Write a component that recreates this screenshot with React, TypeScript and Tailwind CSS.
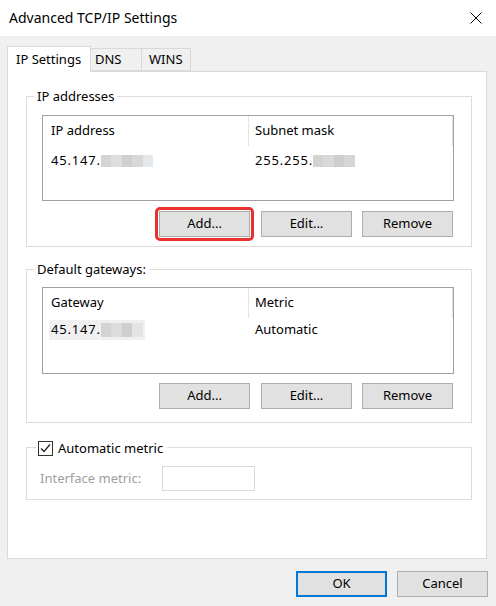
import React from 'react';

function Btn({ label, className = '' }: { label: string; className?: string }) {
    return (
        <div className={`w-[91px] h-[26px] bg-[#e1e1e1] border border-[#adadad] flex items-center justify-center text-[13px] text-black ${className}`}>
            {label}
        </div>
    );
}

function Blur({ shades, h = 'h-[12px]' }: { shades: string[]; h?: string }) {
    return (
        <span className={`inline-flex ${h}`}>
            {shades.map((c, i) => (
                <span key={i} className="w-[10.5px] h-full" style={{ background: c }} />
            ))}
        </span>
    );
}

function GroupLabel({ children }: { children: React.ReactNode }) {
    return (
        <span className="absolute left-[7px] -top-[11px] bg-white px-[3px] text-[13px] leading-[20px] text-black">
            {children}
        </span>
    );
}

export default function App() {
    return (
        <div className="w-[496px] h-[606px] bg-[#f0f0f0] flex flex-col font-['Noto_Sans','Segoe_UI',sans-serif] text-black">
            {/* title bar */}
            <div className="h-[36px] bg-white flex items-center justify-between pl-[9px] pr-[14px]">
                <span className="text-[14px] leading-none">Advanced TCP/IP Settings</span>
                <svg width="12" height="12" viewBox="0 0 12 12">
                    <path d="M0.5 0.5 L11.5 11.5 M11.5 0.5 L0.5 11.5" stroke="#000" strokeWidth="1" />
                </svg>
            </div>

            <div className="pl-[7px] pt-[10px] flex flex-col">
                {/* tabs */}
                <div className="flex items-end h-[25px]">
                    <div className="relative z-10 h-[26px] -mb-px w-[84px] bg-white border border-b-0 border-[#d9d9d9] flex items-center pl-[8px] text-[13px]">
                        IP Settings
                    </div>
                    <div className="h-[23px] w-[51px] bg-[#f0f0f0] border border-l-0 border-[#d9d9d9] flex items-center pl-[4px] text-[13px]">
                        DNS
                    </div>
                    <div className="h-[23px] w-[49px] bg-[#f0f0f0] border border-l-0 border-[#d9d9d9] flex items-center pl-[7px] text-[13px]">
                        WINS
                    </div>
                </div>

                {/* tab panel */}
                <div className="w-[480px] h-[488px] bg-white border border-[#d9d9d9] flex flex-col pl-[18px] pt-[24px]">
                    {/* IP addresses */}
                    <div className="relative w-[446px] h-[151px] border border-[#dcdcdc] pl-[15px] pt-[18px] flex flex-col">
                        <GroupLabel>IP addresses</GroupLabel>
                        <div className="w-[412px] h-[86px] border border-[#a0a0a0] flex flex-col">
                            <div className="flex h-[30px] items-center text-[13px]">
                                <div className="w-[206px] h-full flex items-center pl-[8px] border-r border-[#e5e5e5]">IP address</div>
                                <div className="w-[204px] h-full flex items-center pl-[6px] border-r border-[#e5e5e5]">Subnet mask</div>
                            </div>
                            <div className="flex h-[20px] mt-[5px] items-center text-[13px]">
                                <div className="w-[206px] pl-[8px] flex items-center">
                                    <span className="tracking-[0.8px]">45.147.</span>
                                    <Blur shades={['#d4d4d4', '#dedede', '#cfcfcf', '#d8d8d8', '#e6e9ec']} />
                                </div>
                                <div className="w-[204px] pl-[6px] flex items-center">
                                    <span className="tracking-[0.8px]">255.255.</span>
                                    <Blur shades={['#d2d2d2', '#d9d9d9', '#cdcdcd', '#d6d6d6']} />
                                </div>
                            </div>
                        </div>
                        <div className="flex gap-[10px] ml-[117px] mt-[10px]">
                            <div className="relative">
                                <Btn label="Add..." />
                                <span className="absolute -inset-[4px] border-[3px] border-[#e8322c] rounded-[5px]" />
                            </div>
                            <Btn label="Edit..." className="ml-[1px]" />
                            <Btn label="Remove" />
                        </div>
                    </div>

                    {/* Default gateways */}
                    <div className="relative mt-[22px] w-[446px] h-[154px] border border-[#dcdcdc] pl-[15px] pt-[17px] flex flex-col">
                        <GroupLabel>Default gateways:</GroupLabel>
                        <div className="w-[412px] h-[87px] border border-[#a0a0a0] flex flex-col">
                            <div className="flex h-[30px] items-center text-[13px]">
                                <div className="w-[206px] h-full flex items-center pl-[8px] border-r border-[#e5e5e5]">Gateway</div>
                                <div className="w-[204px] h-full flex items-center pl-[6px] border-r border-[#e5e5e5]">Metric</div>
                            </div>
                            <div className="flex h-[20px] mt-[2px] items-center text-[13px]">
                                <div className="w-[206px] pl-[6px] flex items-center">
                                    <span className="flex items-center h-[20px] bg-[#f0f0f0] pl-[2px] pr-[2px]">
                                        <span className="tracking-[0.8px]">45.147.</span>
                                        <Blur shades={['#d3d3d3', '#dcdcdc', '#cfcfcf', '#e4e4e4']} h="h-[14px]" />
                                    </span>
                                </div>
                                <div className="w-[204px] pl-[6px] flex items-center">Automatic</div>
                            </div>
                        </div>
                        <div className="flex gap-[10px] ml-[117px] mt-[9px]">
                            <Btn label="Add..." />
                            <Btn label="Edit..." className="ml-[1px]" />
                            <Btn label="Remove" />
                        </div>
                    </div>

                    {/* Automatic metric */}
                    <div className="relative mt-[24px] w-[446px] h-[53px] border border-[#dcdcdc] pl-[13px] pt-[18px] flex items-start">
                        <span className="absolute left-[9px] -top-[10px] bg-white pl-[2px] pr-[4px] flex items-center gap-[5px] text-[13px] leading-[20px]">
                            <span className="w-[15px] h-[15px] border border-[#333] flex items-center justify-center">
                                <svg width="11" height="11" viewBox="0 0 11 11">
                                    <path d="M1 5.5 L4 8.5 L10 1.5" fill="none" stroke="#222" strokeWidth="1.3" />
                                </svg>
                            </span>
                            Automatic metric
                        </span>
                        <span className="text-[13px] text-[#a0a0a0] h-[25px] flex items-center">Interface metric:</span>
                        <div className="ml-[21px] w-[93px] h-[25px] border border-[#d9d9d9] bg-white" />
                    </div>
                </div>

                {/* footer */}
                <div className="flex justify-end gap-[10px] pr-[8px] mt-[12px]">
                    <div className="w-[91px] h-[26px] bg-[#e1e1e1] border-2 border-[#0078d7] flex items-center justify-center text-[13px]">
                        OK
                    </div>
                    <Btn label="Cancel" />
                </div>
            </div>
        </div>
    );
}
